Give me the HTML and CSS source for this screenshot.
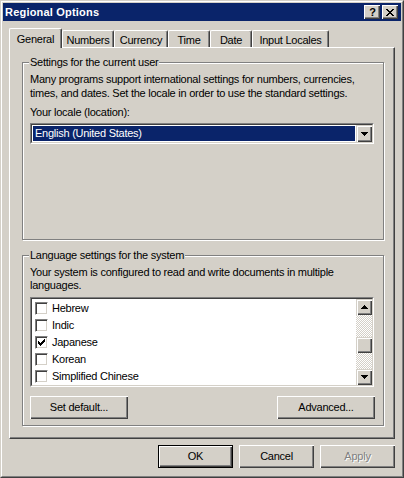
FILE: index.html
```html
<!DOCTYPE html>
<html>
<head>
<meta charset="utf-8">
<link rel="stylesheet" href="styles.css">
</head>
<body>
<div class="window">
  <div class="window-inner">
    <div class="titlebar">
      <span class="title">Regional Options</span>
      <div class="tb-buttons">
        <div class="tb-btn help">?</div>
        <div class="tb-btn close">
          <svg width="8" height="7" viewBox="0 0 8 7" shape-rendering="crispEdges"><path d="M0 0h2v1h-2zM6 0h2v1h-2zM1 1h2v1h-2zM5 1h2v1h-2zM2 2h4v1h-4zM3 3h2v1h-2zM2 4h4v1h-4zM1 5h2v1h-2zM5 5h2v1h-2zM0 6h2v1h-2zM6 6h2v1h-2z" fill="#000"/></svg>
        </div>
      </div>
    </div>
    <div class="content">
      <div class="tabs">
        <div class="tab active w-general">General</div>
        <div class="tab w-numbers">Numbers</div>
        <div class="tab w-currency">Currency</div>
        <div class="tab w-time">Time</div>
        <div class="tab w-date">Date</div>
        <div class="tab w-input">Input Locales</div>
      </div>
      <div class="panel">
        <div class="group group-user">
          <span class="legend">Settings for the current user</span>
          <p class="desc">Many programs support international settings for numbers, currencies,<br>times, and dates. Set the locale in order to use the standard settings.</p>
          <div class="label">Your locale (location):</div>
          <div class="combo">
            <div class="combo-inner">
              <div class="combo-field"><span class="combo-sel">English (United States)</span></div>
              <div class="arrow-btn">
                <svg width="7" height="4" viewBox="0 0 7 4" shape-rendering="crispEdges"><path d="M0 0h7v1h-7zM1 1h5v1h-5zM2 2h3v1h-3zM3 3h1v1h-1z" fill="#000"/></svg>
              </div>
            </div>
          </div>
        </div>
        <div class="group group-system">
          <span class="legend">Language settings for the system</span>
          <p class="desc">Your system is configured to read and write documents in multiple<br>languages.</p>
          <div class="listbox">
            <div class="listbox-inner">
              <div class="items">
                <div class="item"><span class="chk"></span><span>Hebrew</span></div>
                <div class="item"><span class="chk"></span><span>Indic</span></div>
                <div class="item"><span class="chk"><svg width="7" height="7" viewBox="0 0 7 7" shape-rendering="crispEdges"><path d="M0 2h1v3h-1zM1 3h1v3h-1zM2 4h1v3h-1zM3 3h1v3h-1zM4 2h1v3h-1zM5 1h1v3h-1zM6 0h1v3h-1z" fill="#000"/></svg></span><span>Japanese</span></div>
                <div class="item"><span class="chk"></span><span>Korean</span></div>
                <div class="item"><span class="chk"></span><span>Simplified Chinese</span></div>
              </div>
              <div class="scrollbar">
                <div class="arrow-btn sb-btn">
                  <svg width="7" height="4" viewBox="0 0 7 4" shape-rendering="crispEdges"><path d="M3 0h1v1h-1zM2 1h3v1h-3zM1 2h5v1h-5zM0 3h7v1h-7z" fill="#000"/></svg>
                </div>
                <div class="track"><div class="thumb"></div></div>
                <div class="arrow-btn sb-btn">
                  <svg width="7" height="4" viewBox="0 0 7 4" shape-rendering="crispEdges"><path d="M0 0h7v1h-7zM1 1h5v1h-5zM2 2h3v1h-3zM3 3h1v1h-1z" fill="#000"/></svg>
                </div>
              </div>
            </div>
          </div>
          <div class="group-buttons">
            <div class="btn wide">Set default...</div>
            <div class="btn wide">Advanced...</div>
          </div>
        </div>
      </div>
      <div class="dlg-buttons">
        <div class="btn dlg default">OK</div>
        <div class="btn dlg">Cancel</div>
        <div class="btn dlg disabled">Apply</div>
      </div>
    </div>
  </div>
</div>
</body>
</html>
```

FILE: styles.css
```css
* { box-sizing: border-box; }
html, body { margin: 0; padding: 0; }
body {
  font-family: "Liberation Sans", Arial, sans-serif;
  font-size: 11px;
  line-height: 13px;
  letter-spacing: -0.25px;
  color: #000;
  background: #d4d0c8;
}
.window {
  width: 404px;
  height: 478px;
  border: 1px solid;
  border-color: #d4d0c8 #404040 #404040 #d4d0c8;
  background: #d4d0c8;
}
.window-inner {
  height: 100%;
  border: 1px solid;
  border-color: #fff #808080 #808080 #fff;
  padding: 1px;
  display: flex;
  flex-direction: column;
}
.titlebar {
  height: 18px;
  flex: none;
  background: #0a246a;
  color: #fff;
  font-weight: bold;
  display: flex;
  align-items: center;
  justify-content: space-between;
  padding: 0 3px 0 2px;
}
.title { letter-spacing: 0.2px; }
.tb-buttons { display: flex; gap: 2px; }
.tb-btn {
  width: 16px;
  height: 14px;
  background: #d4d0c8;
  color: #000;
  display: flex;
  align-items: center;
  justify-content: center;
  box-shadow: inset 1px 1px #fff, inset -1px -1px #404040, inset -2px -2px #808080;
  font-weight: bold;
  font-size: 11px;
  letter-spacing: 0;
}
.tb-btn.help { padding-top: 1px; padding-left: 1px; }

.content {
  flex: 1;
  display: flex;
  flex-direction: column;
  padding: 7px 6px 7px 6px;
}
.tabs {
  display: flex;
  align-items: flex-end;
  height: 19px;
  flex: none;
  position: relative;
  z-index: 1;
}
.tab {
  height: 17px;
  padding-top: 3px;
  text-align: center;
  border-top: 1px solid #fff;
  border-left: 1px solid #fff;
  border-right: 1px solid #404040;
  border-top-left-radius: 2px;
  border-top-right-radius: 2px;
  box-shadow: inset -1px 0 #808080;
  background: #d4d0c8;
  white-space: nowrap;
}
.tab.active {
  height: 20px;
  padding-top: 4px;
  margin-bottom: -1px;
}
.w-general { width: 53px; }
.w-numbers { width: 52px; }
.w-currency { width: 54px; }
.w-time { width: 42px; }
.w-date { width: 42px; }
.w-input { width: 77px; }

.panel {
  width: 386px;
  height: 392px;
  flex: none;
  border-top: 1px solid #fff;
  border-left: 1px solid #fff;
  border-right: 1px solid #404040;
  border-bottom: 1px solid #404040;
  box-shadow: inset -1px -1px #808080;
  padding: 14px 0 0 12px;
  display: flex;
  flex-direction: column;
}
.group {
  position: relative;
  width: 362px;
  border: 1px solid #808080;
  box-shadow: 1px 1px #fff, inset 1px 1px #fff;
  padding: 9px 0 0 7px;
}
.group-user { height: 178px; }
.group-system { height: 171px; margin-top: 15px; padding-top: 10px; }
.legend {
  position: absolute;
  top: -7px;
  left: 6px;
  padding: 0 1px;
  background: #d4d0c8;
  white-space: nowrap;
}
.desc { margin: 0; white-space: nowrap; }
.group-user .desc { line-height: 14px; }
.label { margin-top: 6px; }

.combo {
  margin-top: 4px;
  width: 344px;
  height: 21px;
  border: 1px solid;
  border-color: #808080 #fff #fff #808080;
}
.combo-inner {
  height: 100%;
  border: 1px solid;
  border-color: #404040 #d4d0c8 #d4d0c8 #404040;
  background: #fff;
  display: flex;
}
.combo-field {
  flex: 1;
  padding: 1px;
  display: flex;
}
.combo-sel {
  flex: 1;
  background: #0a246a;
  color: #fff;
  padding-left: 2px;
  line-height: 15px;
}
.arrow-btn {
  width: 16px;
  height: 17px;
  flex: none;
  background: #d4d0c8;
  display: flex;
  align-items: center;
  justify-content: center;
  box-shadow: inset 1px 1px #d4d0c8, inset 2px 2px #fff, inset -1px -1px #404040, inset -2px -2px #808080;
}
.arrow-btn svg { display: block; }

.listbox {
  margin-top: 5px;
  width: 344px;
  height: 90px;
  border: 1px solid;
  border-color: #808080 #fff #fff #808080;
}
.listbox-inner {
  height: 100%;
  border: 1px solid;
  border-color: #404040 #d4d0c8 #d4d0c8 #404040;
  background: #fff;
  display: flex;
}
.items { flex: 1; padding: 1px 0 0 3px; }
.item {
  height: 17px;
  display: flex;
  align-items: center;
  gap: 4px;
  white-space: nowrap;
}
.chk {
  width: 13px;
  height: 13px;
  flex: none;
  border: 1px solid;
  border-color: #808080 #fff #fff #808080;
  background: #fff;
  box-shadow: inset 1px 1px #404040, inset -1px -1px #d4d0c8;
  display: flex;
  align-items: center;
  justify-content: center;
}
.chk svg { display: block; }
.scrollbar {
  width: 16px;
  flex: none;
  display: flex;
  flex-direction: column;
}
.sb-btn { height: 16px; }
.track {
  flex: 1;
  background: repeating-conic-gradient(#fff 0 25%, #d4d0c8 0 50%) 0 0 / 2px 2px;
  padding-top: 22px;
}
.thumb {
  height: 16px;
  background: #d4d0c8;
  box-shadow: inset 1px 1px #d4d0c8, inset 2px 2px #fff, inset -1px -1px #404040, inset -2px -2px #808080;
}

.group-buttons {
  margin-top: 9px;
  width: 345px;
  display: flex;
  justify-content: space-between;
}
.btn {
  height: 23px;
  background: #d4d0c8;
  display: flex;
  align-items: center;
  justify-content: center;
  box-shadow: inset 1px 1px #fff, inset -1px -1px #404040, inset -2px -2px #808080;
}
.btn.wide { width: 98px; }
.dlg-buttons {
  margin-top: 6px;
  display: flex;
  justify-content: flex-end;
  gap: 6px;
}
.btn.dlg { width: 75px; }
.btn.default {
  box-shadow: inset 0 0 0 1px #000, inset 2px 2px #fff, inset -2px -2px #404040, inset -3px -3px #808080;
}
.btn.disabled {
  color: #808080;
  text-shadow: 1px 1px #fff;
}
```
